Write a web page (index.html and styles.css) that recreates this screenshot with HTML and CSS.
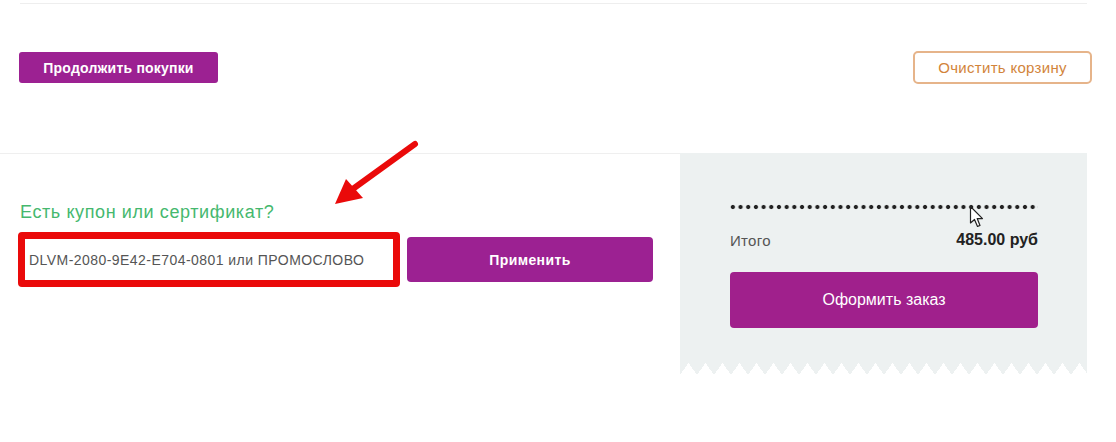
FILE: index.html
```html
<!DOCTYPE html>
<html lang="ru">
<head>
<meta charset="utf-8">
<title>Корзина</title>
<link rel="stylesheet" href="styles.css">
</head>
<body>
<div class="page">
  <div class="cart-top">
    <div class="top-rule"></div>
    <div class="actions">
      <button class="btn btn-primary btn-continue">Продолжить покупки</button>
      <button class="btn btn-outline">Очистить корзину</button>
    </div>
  </div>
  <div class="checkout">
    <div class="coupon">
      <div class="coupon-label">Есть купон или сертификат?</div>
      <div class="coupon-row">
        <div class="coupon-field"><span class="coupon-placeholder">DLVM-2080-9E42-E704-0801 или ПРОМОСЛОВО</span></div>
        <button class="btn btn-primary btn-apply">Применить</button>
      </div>
    </div>
    <div class="summary">
      <div class="summary-body">
        <div class="dots"></div>
        <div class="total-row"><span class="total-label">Итого</span><span class="total-sum">485.00 руб</span></div>
        <button class="btn btn-primary btn-order">Оформить заказ</button>
      </div>
      <div class="zigzag"></div>
    </div>
  </div>
  <svg class="annot-arrow" width="95" height="75" viewBox="0 0 95 75">
    <line x1="85" y1="8" x2="20" y2="55" stroke="#ea0a0a" stroke-width="6" stroke-linecap="round"/>
    <polygon points="5,68 16,43 33,62" fill="#ea0a0a"/>
  </svg>
  <svg class="cursor" width="16" height="24" viewBox="0 0 16 24">
    <path d="M1.5 1.5 L1.5 18 L5.5 14.5 L8.5 21.5 L11 20.4 L8.2 13.6 L13.5 13.6 Z" fill="#fff" stroke="#222" stroke-width="1.2" stroke-linejoin="round"/>
  </svg>
</div>
</body>
</html>
```
FILE: styles.css
```css
* { box-sizing: border-box; }
html, body { margin: 0; padding: 0; background: #fff; }
body { font-family: "Liberation Sans", Arial, sans-serif; color: #333; }
.page { position: relative; width: 1116px; height: 442px; overflow: hidden; }

.cart-top { padding: 3px 0 69px; }
.top-rule { height: 1px; background: #eeeeee; margin: 0 29px 0 20px; }
.actions { display: flex; justify-content: space-between; align-items: center; margin: 47px 24px 0 19px; }

.btn { font-family: "Liberation Sans", Arial, sans-serif; font-size: 14px; border: 0; cursor: pointer; padding: 0; }
.btn-primary { background: #9c2192; color: #fff; font-weight: bold; border-radius: 4px; }
.btn-continue { width: 199px; height: 31px; border-radius: 3px; letter-spacing: 0.2px; }
.btn-outline { width: 179px; height: 33px; background: #fff; color: #d2843a; border: 2px solid #e6b48a; border-radius: 5px; font-size: 15px; letter-spacing: 0.3px; }

.checkout { display: flex; align-items: flex-start; }
.coupon { width: 680px; border-top: 1px solid #efefef; padding: 48px 0 0 18px; }
.coupon-label { font-size: 18px; line-height: 20px; letter-spacing: 0.6px; color: #45b86e; padding-left: 2px; margin-bottom: 10px; }
.coupon-row { display: flex; align-items: center; gap: 7px; }
.coupon-field { width: 382px; height: 55px; border: 7px solid #ea0a0a; border-radius: 4px; background: #fff; display: flex; align-items: center; padding-left: 4px; }
.coupon-placeholder { font-size: 14px; letter-spacing: 0.45px; color: #555; white-space: nowrap; }
.btn-apply { width: 246px; height: 45px; letter-spacing: 0.4px; }

.summary { width: 407px; }
.summary-body { background: #edf1f1; padding: 51px 49px 35px 50px; }
.dots { height: 6px; background-image: radial-gradient(circle, #222 1.6px, rgba(34,34,34,0.4) 2.1px, transparent 2.6px); background-size: 7.7px 6px; background-position: -1px 0; }
.total-row { display: flex; justify-content: space-between; align-items: center; height: 20px; margin-top: 20px; }
.total-label { color: #555; font-size: 15px; letter-spacing: 0.3px; }
.total-sum { color: #222; font-weight: bold; font-size: 16px; }
.btn-order { display: block; width: 100%; height: 56px; margin-top: 22px; background: #a0208c; font-weight: normal; font-size: 16px; }
.zigzag { height: 12px; background: conic-gradient(from 144.7deg at 50% 0, transparent 70.6deg, #edf1f1 0) 0 0 / 17px 12px repeat-x; }

.annot-arrow { position: absolute; left: 330px; top: 136px; }
.cursor { position: absolute; left: 969px; top: 205px; }
```
